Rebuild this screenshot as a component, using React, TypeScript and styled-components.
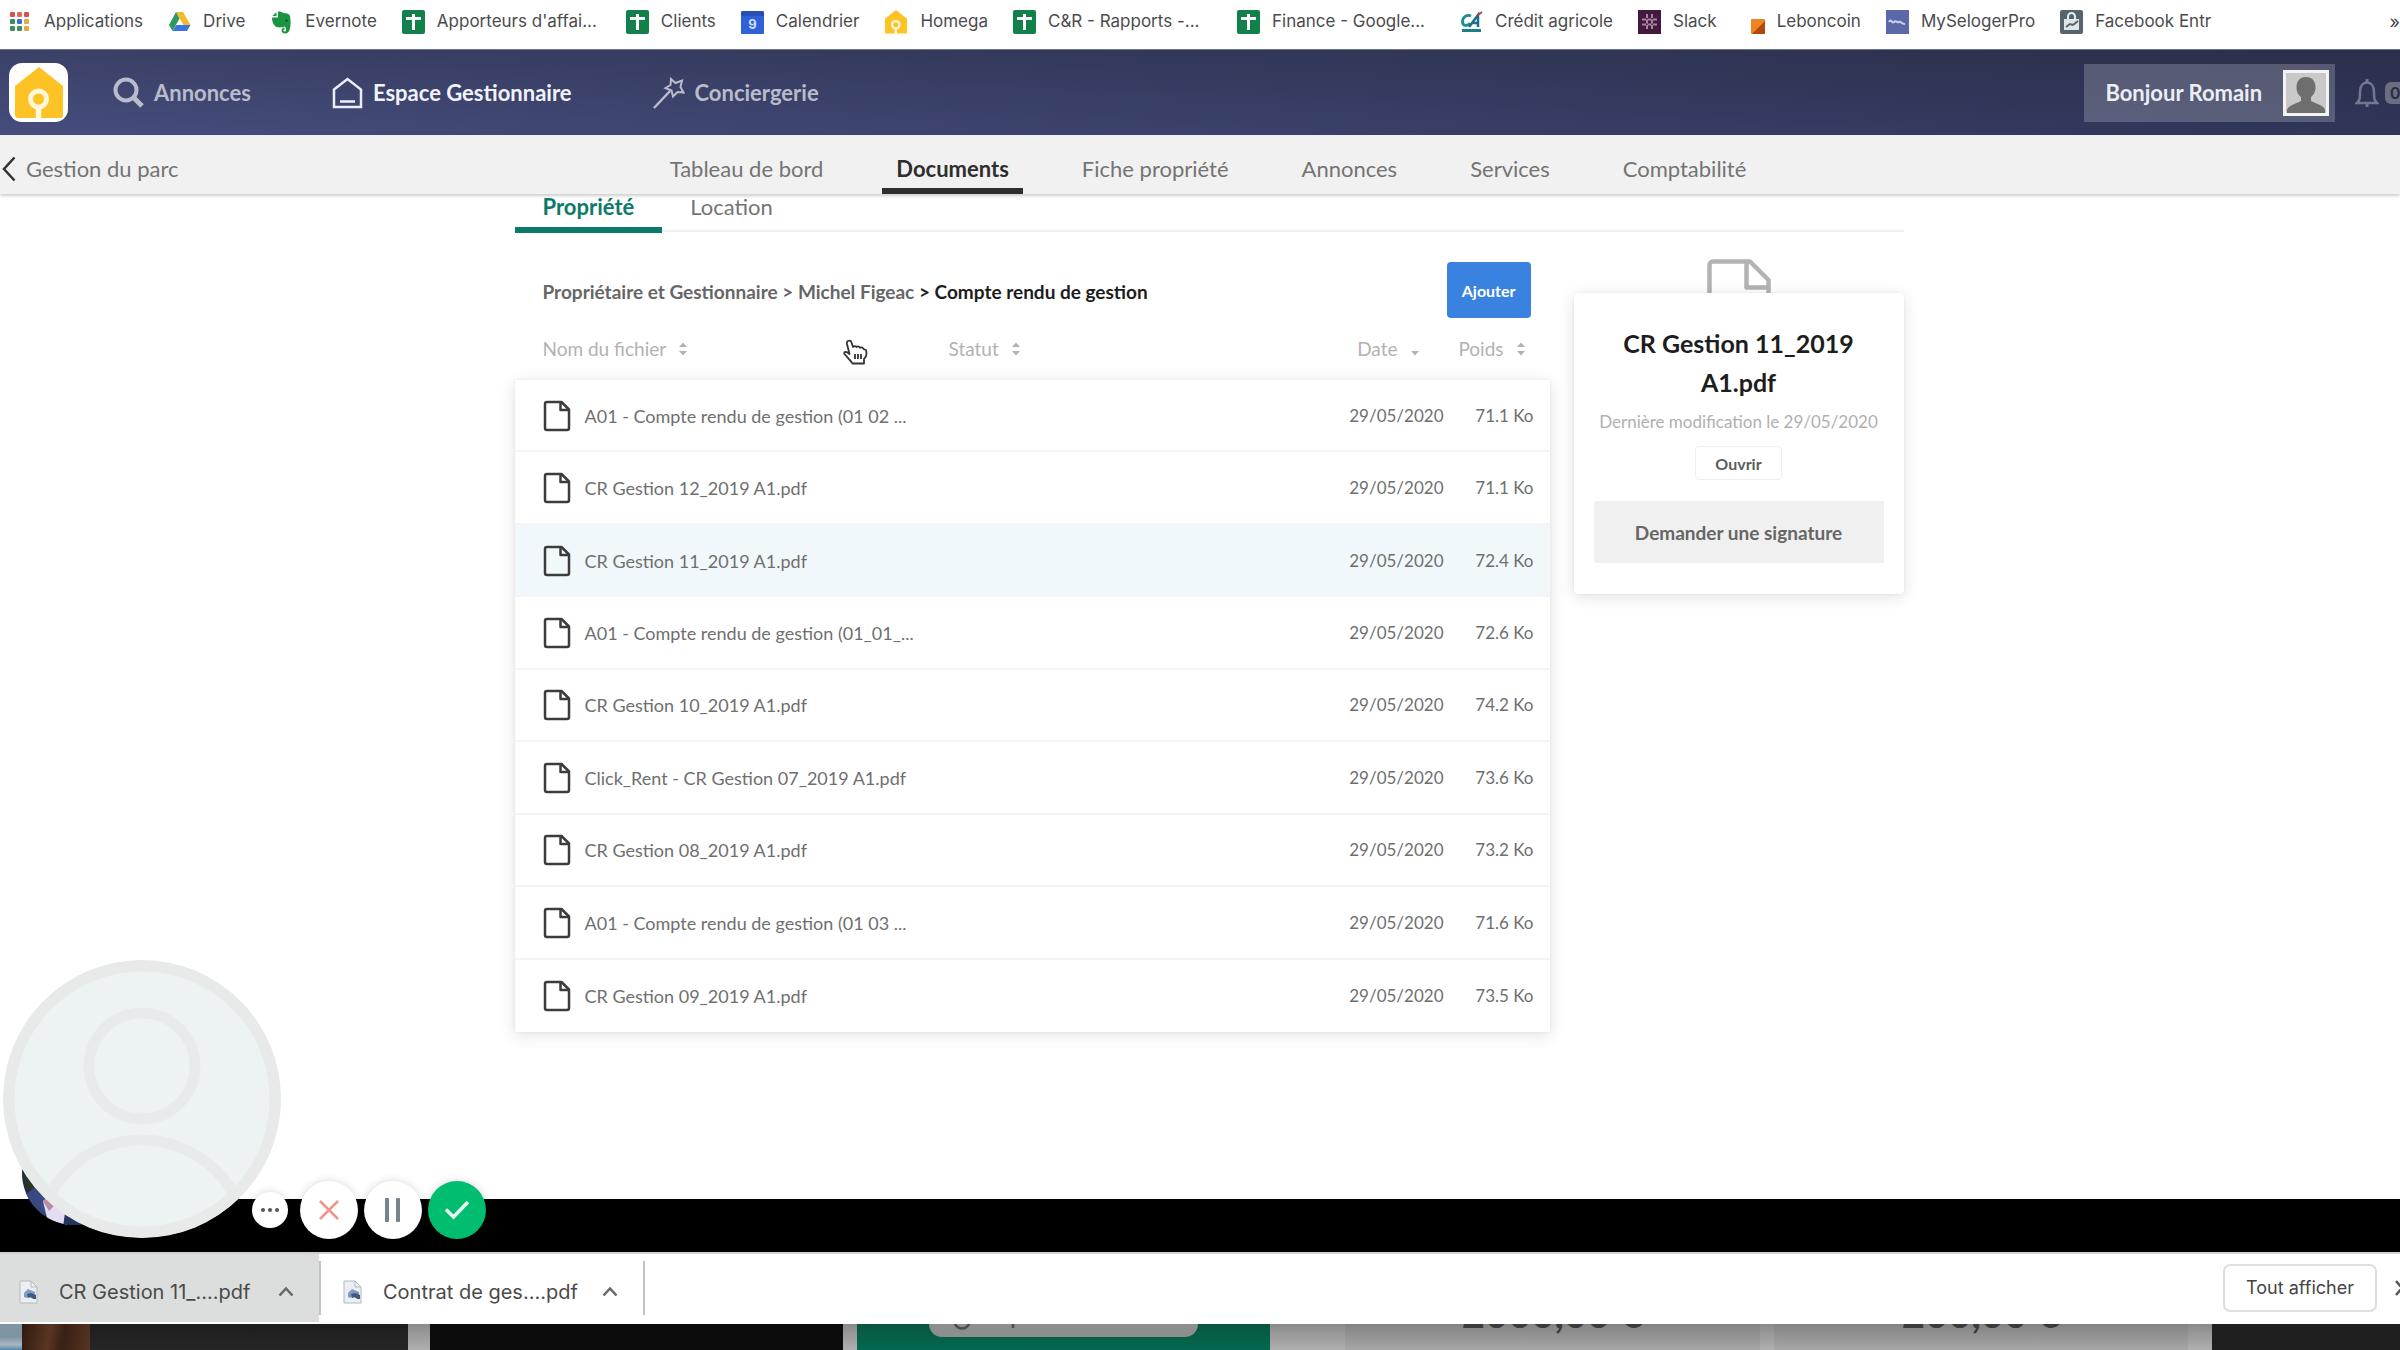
import React from "react";
import styled, { createGlobalStyle, css } from "styled-components";

const Global = createGlobalStyle`
  *, *::before, *::after { box-sizing: border-box; }
  body { margin: 0; background: #fff; font-family: Lato, "Noto Sans", sans-serif; }
  button { font: inherit; border: 0; padding: 0; cursor: pointer; }
  a { color: inherit; text-decoration: none; }
  svg { display: block; flex: none; }
`;

const Screen = styled.div`
  position: relative;
  display: flex;
  flex-direction: column;
  min-height: 100vh;
  overflow: hidden;
`;

/* ---------- bookmarks bar ---------- */
const BookmarksBar = styled.nav`
  display: flex;
  align-items: center;
  gap: 25px;
  padding: 8px 0 14px 7px;
  font: 400 17px/27px Inter, sans-serif;
  color: #4b4b4e;
  white-space: nowrap;
  background: #fff;
`;
const Bookmark = styled.a`
  display: flex;
  align-items: center;
  gap: 12px;
`;
const BookmarkLabel = styled.span<{ $truncated?: boolean }>`
  ${(p) => p.$truncated && css`width: 164px;`}
`;
const MoreBookmarks = styled.button`
  margin-left: auto;
  background: none;
  color: #444;
  font-size: 18px;
`;

/* ---------- main header ---------- */
const Header = styled.header`
  display: flex;
  align-items: center;
  height: 86px;
  padding-left: 9px;
  border-top: 1px solid #6d7390;
  background:
    linear-gradient(90deg, rgba(18, 22, 38, 0) 0%, rgba(18, 22, 38, 0.42) 100%),
    linear-gradient(180deg, #3b4166 0%, #464d7e 100%);
  color: #fff;
`;
const Logo = styled.a`
  display: grid;
  place-items: center;
  width: 59px;
  height: 59px;
  border-radius: 13px;
  background: #fff;
`;
const MainNav = styled.nav`
  display: flex;
  gap: 81px;
  margin-left: 45px;
`;
const MainLink = styled.a<{ $active?: boolean }>`
  display: flex;
  align-items: center;
  gap: 10px;
  font-size: 22px;
  line-height: 28px;
  font-weight: 700;
  color: ${(p) => (p.$active ? "#f2f3fa" : "#b9bccb")};
`;
const UserButton = styled.button`
  display: flex;
  align-items: center;
  gap: 21px;
  height: 58px;
  margin-left: auto;
  padding: 0 6px 0 21px;
  background: rgba(255, 255, 255, 0.2);
  color: #eceef5;
  font-size: 22px;
  font-weight: 700;
`;
const Alerts = styled.button`
  display: flex;
  align-items: center;
  gap: 6px;
  margin-left: 20px;
  background: none;
`;
const AlertCount = styled.span`
  padding: 0 0 0 5px;
  border-radius: 6px 0 0 6px;
  background: #6b6e80;
  color: #2a2d40;
  font-size: 17px;
  line-height: 22px;
  font-weight: 700;
`;

/* ---------- sub navigation ---------- */
const SubHeader = styled.div`
  position: relative;
  display: grid;
  grid-template-columns: 1fr auto 1fr;
  height: 59px;
  background: #f1f1f1;
  box-shadow: 0 2px 3px rgba(0, 0, 0, 0.2);
  color: #747474;
  font-size: 22px;
  line-height: 28px;
  z-index: 1;
`;
const Back = styled.a`
  display: flex;
  align-items: center;
  gap: 10px;
  padding: 8px 0 0 2px;
`;
const SubNav = styled.nav`
  display: flex;
  gap: 45px;
  padding-left: 16px;
`;
const SubLink = styled.a<{ $active?: boolean }>`
  padding: 20px 14px 5px;
  border-bottom: 6px solid ${(p) => (p.$active ? "#2e2e2e" : "transparent")};
  ${(p) => p.$active && css`color: #2e2e2e; font-weight: 700;`}
`;

/* ---------- page ---------- */
const Main = styled.main`
  flex: 1;
  padding-left: 18px;
`;
const Container = styled.div`
  max-width: 1389px;
  margin: 0 auto;
`;
const Tabs = styled.nav`
  display: flex;
  border-bottom: 2px solid #f0f0f0;
  font-size: 22px;
  line-height: 26px;
  color: #747474;
`;
const Tab = styled.a<{ $active?: boolean }>`
  margin-bottom: -3px;
  padding: 0 28px 7px;
  border-bottom: 6px solid ${(p) => (p.$active ? "#0c7a68" : "transparent")};
  ${(p) => p.$active && css`color: #0c7a68; font-weight: 700;`}
`;
const Columns = styled.div`
  display: grid;
  grid-template-columns: minmax(0, 1fr) 330px;
  gap: 24px;
  align-items: start;
  padding-top: 30px;
`;
const Toolbar = styled.div`
  display: flex;
  align-items: center;
  justify-content: space-between;
  padding: 0 19px 0 28px;
`;
const Breadcrumb = styled.nav`
  padding-top: 3px;
  font-size: 19px;
  line-height: 24px;
  font-weight: 700;
  color: #666;
`;
const Current = styled.span`
  color: #1d1d1d;
`;
const AddButton = styled.button`
  height: 56px;
  padding: 0 15px;
  border-radius: 4px;
  background: #3a82e0;
  color: #fff;
  font-size: 16px;
  font-weight: 700;
`;
const Files = styled.table`
  width: 100%;
  height: 714px;
  border-spacing: 0;
  table-layout: fixed;
  color: #6f6f6f;
  font-size: 18px;
  line-height: 24px;
`;
const FilesBody = styled.tbody`
  background: #fff;
  box-shadow: 0 3px 16px rgba(0, 0, 0, 0.12), 0 0 3px rgba(0, 0, 0, 0.06);
`;
const HeadCell = styled.th<{ $width?: number; $pad?: string }>`
  width: ${(p) => (p.$width ? p.$width + "px" : "auto")};
  height: 62px;
  padding: ${(p) => p.$pad || "0"};
  font-weight: 400;
`;
const SortButton = styled.button<{ $end?: boolean }>`
  display: flex;
  align-items: center;
  gap: 12px;
  margin-left: ${(p) => (p.$end ? "auto" : "0")};
  background: none;
  color: #b2b2b2;
  font-size: 19px;
  line-height: 24px;
`;
const FileRow = styled.tr<{ $selected?: boolean }>`
  height: 72px;
  background: ${(p) => (p.$selected ? "#f1f8fc" : "#fff")};
  &:not(:last-child) td { border-bottom: 2px solid #f4f4f4; }
`;
const Cell = styled.td`
  padding: 1px 0 0;
`;
const NameCell = styled(Cell)`
  padding-left: 28px;
`;
const DateCell = styled(Cell)`
  text-align: right;
  font-size: 17px;
`;
const SizeCell = styled(DateCell)`
  padding-right: 16px;
`;
const FileLink = styled.a`
  display: flex;
  align-items: center;
  gap: 14px;
  white-space: nowrap;
`;

/* ---------- details panel ---------- */
const Details = styled.aside`
  display: flex;
  flex-direction: column;
  align-items: center;
  margin-top: -3px;
`;
const IconPeek = styled.div`
  height: 34px;
  overflow: hidden;
`;
const DetailsCard = styled.section`
  align-self: stretch;
  display: flex;
  flex-direction: column;
  align-items: center;
  padding: 31px 20px;
  border-radius: 4px;
  background: #fff;
  box-shadow: 0 3px 16px rgba(0, 0, 0, 0.12), 0 0 3px rgba(0, 0, 0, 0.06);
  text-align: center;
`;
const FileTitle = styled.h2`
  margin: 0;
  padding: 0 20px;
  color: #1d1d1d;
  font-size: 25px;
  line-height: 39px;
`;
const Modified = styled.p`
  margin: 8px 0 12px;
  color: #b0b0b0;
  font-size: 17px;
  line-height: 24px;
  white-space: nowrap;
`;
const OpenButton = styled.button`
  height: 34px;
  padding: 0 19px;
  border: 1px solid #efefef;
  border-radius: 4px;
  background: #fff;
  color: #5c5c5c;
  font-size: 16px;
  font-weight: 700;
`;
const SignButton = styled.button`
  align-self: stretch;
  height: 62px;
  margin-top: 21px;
  border-radius: 2px;
  background: #f0f0f0;
  color: #666;
  font-size: 19px;
  font-weight: 700;
`;

/* ---------- bottom of the screen ---------- */
const BlackBand = styled.div`
  height: 53px;
  background: #000;
`;
const Downloads = styled.footer`
  display: flex;
  align-items: stretch;
  height: 72px;
  padding-bottom: 2px;
  border-top: 2px solid #d0d0d0;
  background: #fff;
  color: #4a4a4a;
  font: 400 20px/26px Inter, sans-serif;
`;
const Download = styled.button<{ $pressed?: boolean }>`
  display: flex;
  align-items: center;
  padding: 7px 25px 0 19px;
  background: ${(p) => (p.$pressed ? "#dcdddd" : "#fff")};
  color: inherit;
`;
const DownloadName = styled.span`
  min-width: 196px;
  margin: 0 23px 0 20px;
  text-align: left;
`;
const Divider = styled.span`
  align-self: center;
  width: 2px;
  height: 54px;
  margin-right: 3px;
  background: #c4c4c4;
`;
const ShowAll = styled.button`
  align-self: center;
  height: 48px;
  margin-left: auto;
  padding: 0 21px;
  border: 2px solid #dedede;
  border-radius: 7px;
  background: #fff;
  color: #444;
  font-size: 18px;
`;
const CloseDownloads = styled.button`
  align-self: center;
  margin: 0 -10px 0 17px;
  background: none;
  color: #555;
`;

const Strip = styled.div`
  display: flex;
  height: 26px;
  overflow: hidden;
`;
const Segment = styled.div<{ $span: number; $bg: string }>`
  flex: ${(p) => p.$span} 1 0;
  min-width: 0;
  height: 26px;
  overflow: hidden;
  background: ${(p) => p.$bg};
`;
const Price = styled.div`
  margin-top: -31px;
  color: #3b3b3b;
  font-size: 40px;
  line-height: 40px;
  font-weight: 700;
  text-align: center;
  white-space: nowrap;
`;
const Pill = styled.div`
  display: flex;
  height: 13px;
  margin: 0 72px;
  padding-left: 24px;
  overflow: hidden;
  border-radius: 0 0 16px 16px;
  background: #8d8f8e;
`;

/* ---------- floating recorder ---------- */
const Recorder = styled.div`
  position: absolute;
  left: 3px;
  bottom: 111px;
  z-index: 2;
  display: flex;
  align-items: flex-end;
  pointer-events: none;
`;
const RecorderControls = styled.div`
  display: flex;
  align-items: center;
  gap: 6px;
  margin-left: -29px;
`;
const RoundButton = styled.button<{ $small?: boolean; $bg?: string }>`
  display: grid;
  place-items: center;
  width: ${(p) => (p.$small ? 36 : 58)}px;
  height: ${(p) => (p.$small ? 36 : 58)}px;
  margin-right: ${(p) => (p.$small ? 6 : 0)}px;
  border-radius: 50%;
  background: ${(p) => p.$bg || "#fff"};
  box-shadow: 0 0 8px rgba(0, 0, 0, 0.16);
  pointer-events: auto;
`;
const Pointer = styled.svg`
  position: absolute;
  left: 843px;
  top: 339px;
  z-index: 3;
`;

/* ---------- drawings ---------- */
const AppsIcon = () => (
  <svg width="25" height="23" viewBox="0 0 25 23">
    {["#d9534a", "#e0675e", "#d9534a", "#3c8f5a", "#3f6fd0", "#e3a84a", "#3c8f5a", "#3c8f5a", "#e3a84a"].map((c, i) => (
      <rect key={i} x={3 + (i % 3) * 7} y={2 + Math.floor(i / 3) * 7} width="5" height="5" rx="1" fill={c} />
    ))}
  </svg>
);
const DriveIcon = () => (
  <svg width="23" height="23" viewBox="0 0 23 23">
    <path d="M8 2h7l7.500 13h-7z" fill="#f5ba2a" />
    <path d="M8 2l3.500 6.500L4.500 21 1 15z" fill="#2b9a5c" />
    <path d="M8.200 15h14.300L19 21H4.500z" fill="#3c76dd" />
  </svg>
);
const EvernoteIcon = () => (
  <svg width="23" height="24" viewBox="0 0 23 24">
    <path d="M8 1.500c3 0 4 .5 5 1.500 4 .3 6.500.8 7 3 .8 4 .8 9 0 12.500-.8 3.500-2.200 5-5 5-2.500 0-3.500-1.500-3.500-3s1-3 3-3v2c-2 0-1.200 2 .5 2 1.600 0 1.500-4-.5-5-1.500 1-5 1-6.500.8C4 17 2 12 2 7.500h5c1 0 1-.5 1-1z" fill="#1b9440" />
    <path d="M6.500 2L2.500 6h4z" fill="#1b9440" />
    <circle cx="16.500" cy="10.500" r="1.200" fill="#0c5a24" />
  </svg>
);
const SheetIcon = () => (
  <svg width="23" height="24" viewBox="0 0 23 24">
    <rect width="23" height="24" rx="2" fill="#12804a" />
    <path d="M4 8.500h15M11.500 4v16" stroke="#fff" strokeWidth="3" fill="none" />
  </svg>
);
const CalendarIcon = () => (
  <svg width="23" height="24" viewBox="0 0 23 24">
    <rect y="1" width="23" height="23" rx="1" fill="#2f62d9" />
    <path d="M0 3l2-2h19l2 2v3H0z" fill="#2450b8" />
    <text x="11.500" y="19" textAnchor="middle" fontFamily="Inter, sans-serif" fontSize="13" fontWeight="700" fill="#cfdcfa">9</text>
  </svg>
);
const HomeKey = ({ size }: { size: number }) => (
  <svg width={size} height={size} viewBox="0 0 48 52">
    <path d="M24 0L48 19V48a3 3 0 0 1-3 3H3a3 3 0 0 1-3-3V19z" fill="#fdc223" />
    <circle cx="23.500" cy="32" r="8" fill="none" stroke="#fff6dc" strokeWidth="5" />
    <path d="M23.500 38V51" stroke="#fff6dc" strokeWidth="5.500" />
  </svg>
);
const CreditIcon = () => (
  <svg width="22" height="22" viewBox="0 0 22 22" fill="none">
    <path d="M10 5C6 3 1.500 6 1.500 10.500 1.500 15 6 16 9 12" stroke="#1c8f92" strokeWidth="2.800" />
    <path d="M8 16L17 4v12M11 12h6" stroke="#1c6f86" strokeWidth="2.500" />
    <path d="M17 4l4-3" stroke="#c14545" strokeWidth="2" />
    <path d="M1 19.500h19" stroke="#1c7f86" strokeWidth="3" />
  </svg>
);
const SlackIcon = () => (
  <svg width="23" height="24" viewBox="0 0 23 24">
    <rect width="23" height="24" fill="#43193f" />
    <path d="M9 4v16M14 4v16M4 9.500h15M4 14.500h15" stroke="#a684a3" strokeWidth="2" strokeDasharray="4 1.500" />
  </svg>
);
const LeboncoinIcon = () => (
  <svg width="23" height="24" viewBox="0 0 23 24">
    <rect x="9" y="9" width="14" height="15" rx="1" fill="#f08322" />
    <path d="M23 11v12a1 1 0 0 1-1 1H10z" fill="#b24809" />
  </svg>
);
const SelogerIcon = () => (
  <svg width="23" height="24" viewBox="0 0 23 24">
    <rect width="23" height="24" fill="#5a68a8" />
    <path d="M3 12c2-4 3 2 5 0s3 1 5 0 2 2 6 2" stroke="#c9cfe8" strokeWidth="2" fill="none" />
  </svg>
);
const FacebookIcon = () => (
  <svg width="23" height="24" viewBox="0 0 23 24">
    <rect width="23" height="24" rx="2" fill="#56646f" />
    <path d="M8 9V6.500a3.500 3.500 0 0 1 7 0V9" stroke="#e6ebee" strokeWidth="2" fill="none" />
    <rect x="4" y="9" width="15" height="11" fill="#dfe5e8" />
    <path d="M6 17l4-3 3 1 5-4" stroke="#56646f" strokeWidth="2" fill="none" />
  </svg>
);
const SearchIcon = () => (
  <svg width="31" height="31" viewBox="0 0 31 31" fill="none" stroke="#b9bccb" strokeWidth="4">
    <circle cx="13" cy="13" r="10.500" />
    <path d="M20.500 20.500L29 29" strokeWidth="5" />
  </svg>
);
const HouseIcon = () => (
  <svg width="31" height="32" viewBox="0 0 31 32" fill="none" stroke="#eceef8" strokeWidth="2.500">
    <path d="M2 12.500L15.500 2 29 12.500V30H2z" />
    <path d="M8 24.500h15" />
  </svg>
);
const WandIcon = () => (
  <svg width="32" height="32" viewBox="0 0 32 32" fill="none" stroke="#b9bccb" strokeWidth="2">
    <path d="M1 31L17 14" strokeWidth="2.500" />
    <path d="M18 2l4.500 4L29 3.500 27.500 10l3 5.500-6-.5-4.500 4.500-1.500-6L12.500 11l5-3z" />
  </svg>
);
const Avatar = () => (
  <svg width="46" height="46" viewBox="0 0 46 46">
    <rect width="46" height="46" fill="#f3f3f3" />
    <rect x="3" y="3" width="40" height="40" fill="#c9c9c9" />
    <path d="M23 7c6 0 9.500 4 9.500 10 0 5-2 8-4.500 10v4c3 2 13 4 14 9v3H4v-3c1-5 11-7 14-9v-4c-2.500-2-4.500-5-4.500-10 0-6 3.500-10 9.500-10z" fill="#6e6e6e" />
  </svg>
);
const BellIcon = () => (
  <svg width="24" height="32" viewBox="0 0 24 32" fill="none" stroke="#74788f" strokeWidth="2.500">
    <path d="M2 26h20c-3-3-3-5-3-11 0-6-3-9.500-7-9.500S5 9 5 15c0 6 0 8-3 11z" />
    <path d="M12 2v4M12 26v4" strokeWidth="3" />
  </svg>
);
const FileIcon = () => (
  <svg width="28" height="32" viewBox="0 0 28 32" fill="none" stroke="#3c3c3c" strokeWidth="2.500" strokeLinejoin="round">
    <path d="M2 4a2 2 0 0 1 2-2h14.500L26 9.500V28a2 2 0 0 1-2 2H4a2 2 0 0 1-2-2z" />
    <path d="M17.500 2.500V10H26" />
  </svg>
);
const BigFileIcon = () => (
  <svg width="64" height="72" viewBox="0 0 64 72" fill="none" stroke="#b3b3b3" strokeWidth="4.500" strokeLinejoin="round">
    <path d="M2.500 6a3.500 3.500 0 0 1 3.500-3.500H43L61.500 21v45a3.500 3.500 0 0 1-3.500 3.500H6A3.500 3.500 0 0 1 2.500 66z" />
    <path d="M39.500 3v25.500h21.500" />
  </svg>
);
const SortIcon = ({ down }: { down?: boolean }) => (
  <svg width="10" height="16" viewBox="0 0 10 16" fill="#b2b2b2">
    {!down && <path d="M1 6l4-4.500L9 6z" />}
    <path d="M1 10l4 4.500L9 10z" />
  </svg>
);
const PdfIcon = () => (
  <svg width="20" height="24" viewBox="0 0 20 24">
    <path d="M1 1h11l6 6v16H1z" fill="#eceef2" stroke="#b4b8bf" />
    <path d="M12 1v6h6" fill="none" stroke="#b4b8bf" />
    <path d="M5 13l4-4 7 3v6h-4l-2-2-2 2-3-1z" fill="#7d9cc9" />
    <path d="M8 14l4-1 5 2v4h-3l-2-2-3 1z" fill="#44587c" />
  </svg>
);
const ChevronUp = () => (
  <svg width="16" height="12" viewBox="0 0 16 12" fill="none" stroke="#666" strokeWidth="2.500">
    <path d="M1.500 9.500L8 2.500l6.500 7" />
  </svg>
);
const Bubble = () => (
  <svg width="278" height="280" viewBox="0 0 278 280">
    <defs>
      <clipPath id="cam"><circle cx="71" cy="214" r="52" /></clipPath>
      <clipPath id="disc"><circle cx="139" cy="140" r="134" /></clipPath>
    </defs>
    <g clipPath="url(#cam)">
      <rect x="15" y="160" width="112" height="110" fill="#1e2b4d" />
      <path d="M15 160h30l6 80-28-10z" fill="#2b3524" />
      <path d="M20 238l12-10 16 14-8 20z" fill="#39497f" />
      <path d="M40 242l14-12 18 24-10 14H46z" fill="#e3dcf2" />
      <path d="M40 242l8-6 6 8-8 8z" fill="#b98ba8" />
      <path d="M62 254h40v14H60z" fill="#24355f" />
    </g>
    <circle cx="139" cy="140" r="139" fill="#e8eaea" />
    <circle cx="139" cy="140" r="128" fill="#edf3f3" />
    <g clipPath="url(#disc)" fill="none" stroke="#e7ebeb" strokeWidth="11">
      <circle cx="139" cy="107" r="53" />
      <circle cx="139" cy="286" r="105" fill="#edf2f2" />
    </g>
    <circle cx="139" cy="140" r="133" fill="none" stroke="#e8eaea" strokeWidth="11" />
  </svg>
);

/* ---------- data ---------- */
const bookmarks: { label: string; icon: React.ReactNode; truncated?: boolean }[] = [
  { label: "Applications", icon: <AppsIcon /> },
  { label: "Drive", icon: <DriveIcon /> },
  { label: "Evernote", icon: <EvernoteIcon /> },
  { label: "Apporteurs d'affai...", icon: <SheetIcon />, truncated: true },
  { label: "Clients", icon: <SheetIcon /> },
  { label: "Calendrier", icon: <CalendarIcon /> },
  { label: "Homega", icon: <HomeKey size={24} /> },
  { label: "C&R - Rapports -...", icon: <SheetIcon />, truncated: true },
  { label: "Finance - Google...", icon: <SheetIcon />, truncated: true },
  { label: "Crédit agricole", icon: <CreditIcon /> },
  { label: "Slack", icon: <SlackIcon /> },
  { label: "Leboncoin", icon: <LeboncoinIcon /> },
  { label: "MySelogerPro", icon: <SelogerIcon /> },
  { label: "Facebook Entr", icon: <FacebookIcon /> },
];
const sections = ["Tableau de bord", "Documents", "Fiche propriété", "Annonces", "Services", "Comptabilité"];
const files = [
  ["A01 - Compte rendu de gestion (01 02 ...", "71.1 Ko"],
  ["CR Gestion 12_2019 A1.pdf", "71.1 Ko"],
  ["CR Gestion 11_2019 A1.pdf", "72.4 Ko"],
  ["A01 - Compte rendu de gestion (01_01_...", "72.6 Ko"],
  ["CR Gestion 10_2019 A1.pdf", "74.2 Ko"],
  ["Click_Rent - CR Gestion 07_2019 A1.pdf", "73.6 Ko"],
  ["CR Gestion 08_2019 A1.pdf", "73.2 Ko"],
  ["A01 - Compte rendu de gestion (01 03 ...", "71.6 Ko"],
  ["CR Gestion 09_2019 A1.pdf", "73.5 Ko"],
];
const grey = "linear-gradient(#8a8a8a, #b0b0b0)";
const panel = "linear-gradient(#838383, #a6a6a6)";

export default function App() {
  return (
    <Screen>
      <Global />
      <BookmarksBar aria-label="Favoris">
        {bookmarks.map((b) => (
          <Bookmark href="#" key={b.label}>
            {b.icon}
            <BookmarkLabel $truncated={b.truncated}>{b.label}</BookmarkLabel>
          </Bookmark>
        ))}
        <MoreBookmarks>»</MoreBookmarks>
      </BookmarksBar>

      <Header>
        <Logo href="#" aria-label="Accueil"><HomeKey size={52} /></Logo>
        <MainNav>
          <MainLink href="#"><SearchIcon />Annonces</MainLink>
          <MainLink href="#" $active><HouseIcon />Espace Gestionnaire</MainLink>
          <MainLink href="#"><WandIcon />Conciergerie</MainLink>
        </MainNav>
        <UserButton>Bonjour Romain<Avatar /></UserButton>
        <Alerts aria-label="Notifications"><BellIcon /><AlertCount>0</AlertCount></Alerts>
      </Header>

      <SubHeader>
        <Back href="#">
          <svg width="14" height="26" viewBox="0 0 14 26" fill="none" stroke="#333" strokeWidth="2.500"><path d="M12.500 1.500L2 13l10.500 11.500" /></svg>
          Gestion du parc
        </Back>
        <SubNav>
          {sections.map((s) => <SubLink href="#" key={s} $active={s === "Documents"}>{s}</SubLink>)}
        </SubNav>
      </SubHeader>

      <Main>
        <Container>
          <Tabs>
            <Tab href="#" $active>Propriété</Tab>
            <Tab href="#">Location</Tab>
          </Tabs>
          <Columns>
            <section>
              <Toolbar>
                <Breadcrumb>
                  <a href="#">Propriétaire et Gestionnaire</a> {">"} <a href="#">Michel Figeac</a> <Current>{"> Compte rendu de gestion"}</Current>
                </Breadcrumb>
                <AddButton>Ajouter</AddButton>
              </Toolbar>
              <Files>
                <thead>
                  <tr>
                    <HeadCell $width={434} $pad="0 0 0 28px"><SortButton>Nom du fichier<SortIcon /></SortButton></HeadCell>
                    <HeadCell><SortButton>Statut<SortIcon /></SortButton></HeadCell>
                    <HeadCell $width={120} $pad="0 24px 0 0"><SortButton $end>Date<SortIcon down /></SortButton></HeadCell>
                    <HeadCell $width={106} $pad="0 24px 0 0"><SortButton $end>Poids<SortIcon /></SortButton></HeadCell>
                  </tr>
                </thead>
                <FilesBody>
                  {files.map(([name, size], i) => (
                    <FileRow key={name} $selected={i === 2}>
                      <NameCell><FileLink href="#"><FileIcon />{name}</FileLink></NameCell>
                      <Cell />
                      <DateCell>29/05/2020</DateCell>
                      <SizeCell>{size}</SizeCell>
                    </FileRow>
                  ))}
                </FilesBody>
              </Files>
            </section>
            <Details>
              <IconPeek><BigFileIcon /></IconPeek>
              <DetailsCard>
                <FileTitle>CR Gestion 11_2019 A1.pdf</FileTitle>
                <Modified>Dernière modification le 29/05/2020</Modified>
                <OpenButton>Ouvrir</OpenButton>
                <SignButton>Demander une signature</SignButton>
              </DetailsCard>
            </Details>
          </Columns>
        </Container>
      </Main>

      <BlackBand />
      <Downloads>
        <Download $pressed><PdfIcon /><DownloadName>CR Gestion 11_....pdf</DownloadName><ChevronUp /></Download>
        <Divider />
        <Download><PdfIcon /><DownloadName>Contrat de ges....pdf</DownloadName><ChevronUp /></Download>
        <Divider />
        <ShowAll>Tout afficher</ShowAll>
        <CloseDownloads aria-label="Fermer">
          <svg width="16" height="18" viewBox="0 0 16 18" stroke="#555" strokeWidth="2.500"><path d="M2 2l12 14M14 2L2 16" /></svg>
        </CloseDownloads>
      </Downloads>
      <Strip>
        <Segment $span={22} $bg="linear-gradient(#7f95a3 50%, #aab7c0 80%, #4f86ad)" />
        <Segment $span={68} $bg="linear-gradient(100deg, #2f1a10, #5a3522 40%, #3a2015 60%, #56331f)" />
        <Segment $span={318} $bg="linear-gradient(#1e1e1e, #262626)" />
        <Segment $span={22} $bg={grey} />
        <Segment $span={413} $bg="#0c0c0c" />
        <Segment $span={14} $bg={grey} />
        <Segment $span={413} $bg="linear-gradient(#0a5541, #026a4f)">
          <Pill>
            <svg width="80" height="13" viewBox="0 0 80 13" fill="none" stroke="#4c4c4c" strokeWidth="2.500">
              <circle cx="9" cy="-3" r="7.500" />
              <path d="M60 0v4" />
            </svg>
          </Pill>
        </Segment>
        <Segment $span={75} $bg={grey} />
        <Segment $span={415} $bg={panel}><Price>2000,00 €</Price></Segment>
        <Segment $span={14} $bg={grey} />
        <Segment $span={414} $bg={panel}><Price>200,00 €</Price></Segment>
        <Segment $span={24} $bg={grey} />
        <Segment $span={188} $bg="#1f1f1f" />
      </Strip>

      <Recorder>
        <Bubble />
        <RecorderControls>
          <RoundButton $small aria-label="Options">
            <svg width="18" height="4" viewBox="0 0 18 4" fill="#555"><circle cx="2" cy="2" r="2" /><circle cx="9" cy="2" r="2" /><circle cx="16" cy="2" r="2" /></svg>
          </RoundButton>
          <RoundButton aria-label="Annuler">
            <svg width="20" height="20" viewBox="0 0 20 20" stroke="#f0948c" strokeWidth="2.500"><path d="M1 1l18 18M19 1L1 19" /></svg>
          </RoundButton>
          <RoundButton aria-label="Pause">
            <svg width="16" height="24" viewBox="0 0 16 24" fill="#74848f"><rect width="4" height="24" rx="1" /><rect x="11" width="4" height="24" rx="1" /></svg>
          </RoundButton>
          <RoundButton $bg="#00bd70" aria-label="Terminer">
            <svg width="26" height="20" viewBox="0 0 26 20" fill="none" stroke="#e9fff5" strokeWidth="3.500"><path d="M2 9.500L9.500 17 24 2" /></svg>
          </RoundButton>
        </RecorderControls>
      </Recorder>
      <Pointer width="25" height="27" viewBox="0 0 25 27" fill="#fff" stroke="#333" strokeWidth="1.800" strokeLinejoin="round">
        <path d="M5 2c2-1 3 0 3.500 1.500L10 8c1.500-1.500 3-1 3.500 0 1.500-1 3-.5 3.500.7 1.500-.7 3 0 3.500 1.300l2.500 1c.8 3 .5 7-2 9v4.500H9.500C8 22 4 18 1.500 15c-1-1.500 1-3 3-1.500l2 1.500L4 5c-.3-1.500 0-2.500 1-3z" />
        <path d="M12 15v5M15 15v5M18 15v5" />
      </Pointer>
    </Screen>
  );
}
